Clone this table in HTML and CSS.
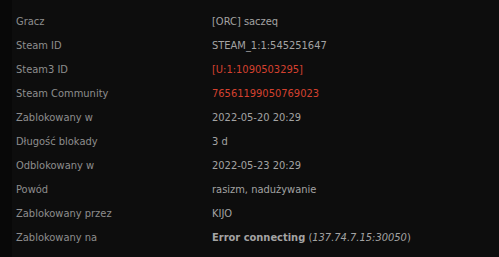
FILE: index.html
```html
<!DOCTYPE html>
<html lang="pl">
<head>
    <meta charset="UTF-8">
    <meta name="viewport" content="width=device-width, initial-scale=1.0">
    <title>Blokada</title>
    <link rel="stylesheet" href="styles.css">
</head>
<body>
    <div class="panel">
        <table class="ban-info">
            <tr><td>Gracz</td><td>[ORC] saczeq</td></tr>
            <tr><td>Steam ID</td><td>STEAM_1:1:545251647</td></tr>
            <tr><td>Steam3 ID</td><td class="link">[U:1:1090503295]</td></tr>
            <tr><td>Steam Community</td><td class="link">76561199050769023</td></tr>
            <tr><td>Zablokowany w</td><td>2022-05-20 20:29</td></tr>
            <tr><td>Długość blokady</td><td>3 d</td></tr>
            <tr><td>Odblokowany w</td><td>2022-05-23 20:29</td></tr>
            <tr><td>Powód</td><td>rasizm, nadużywanie</td></tr>
            <tr><td>Zablokowany przez</td><td>KIJO</td></tr>
            <tr><td>Zablokowany na</td><td><b>Error connecting</b> (<i>137.74.7.15:30050</i>)</td></tr>
        </table>
    </div>
</body>
</html>
```

FILE: styles.css
```css
body {
    margin: 0;
    background-color: #080808;
    font-family: "DejaVu Sans Condensed", "DejaVu Sans", sans-serif;
    font-stretch: condensed;
    font-size: 11px;
    color: #909090;
}
.panel {
    margin-left: 12px;
    height: 257px;
    padding-top: 9px;
    box-sizing: border-box;
    background-color: #0d0d0d;
}
.ban-info {
    border-collapse: collapse;
    width: 100%;
}
.ban-info td {
    height: 24px;
    padding: 0 4px;
    vertical-align: middle;
    white-space: nowrap;
}
.ban-info td:first-child {
    width: 188px;
    color: #8e8e8e;
}
.ban-info td:last-child {
    color: #a3a3a3;
}
.ban-info td.link {
    color: #d4412f;
}
```
